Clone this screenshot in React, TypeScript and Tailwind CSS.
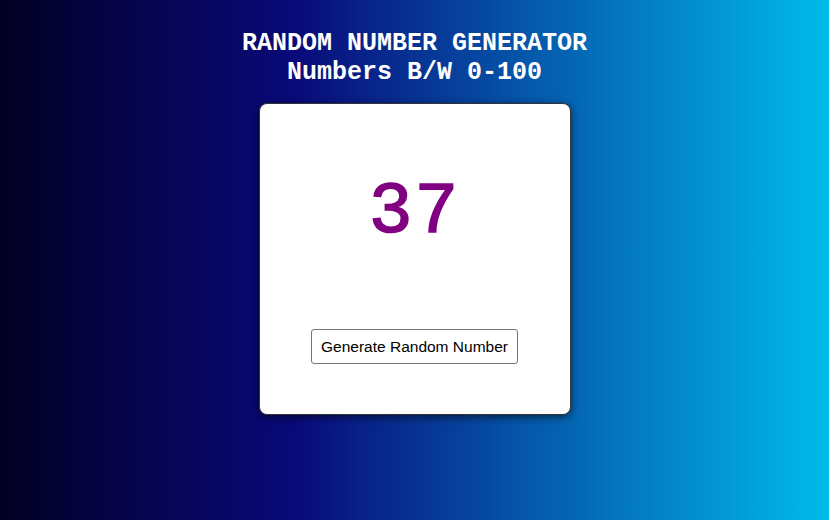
export default function App() {
  return (
    <div className="w-[829px] h-[520px] bg-[linear-gradient(90deg,#020024_0%,#090979_35%,#00bbea_100%)] flex flex-col items-center">
      <h1 className="mt-[29px] text-center text-white font-bold text-[25px] leading-[29px] font-['Liberation_Mono','Courier_New',monospace]">
        RANDOM NUMBER GENERATOR
        <br />
        Numbers B/W 0-100
      </h1>
      <div className="mt-[16px] w-[312px] h-[312px] bg-white border border-[#333] rounded-[8px] shadow-[0_2px_8px_rgba(0,0,0,0.6)] flex flex-col items-center">
        <div className="mt-[63px] h-[90px] flex items-center text-[73px] leading-none tracking-[2px] text-[#800080] font-['Liberation_Mono','Courier_New',monospace] [-webkit-text-stroke:1.5px_#800080]">
          37
        </div>
        <button className="mt-[72px] h-[35px] px-[9px] bg-white border border-[#767676] rounded-[3px] text-[15.5px] text-black font-['Liberation_Sans',Arial,sans-serif]">
          Generate Random Number
        </button>
      </div>
    </div>
  );
}
